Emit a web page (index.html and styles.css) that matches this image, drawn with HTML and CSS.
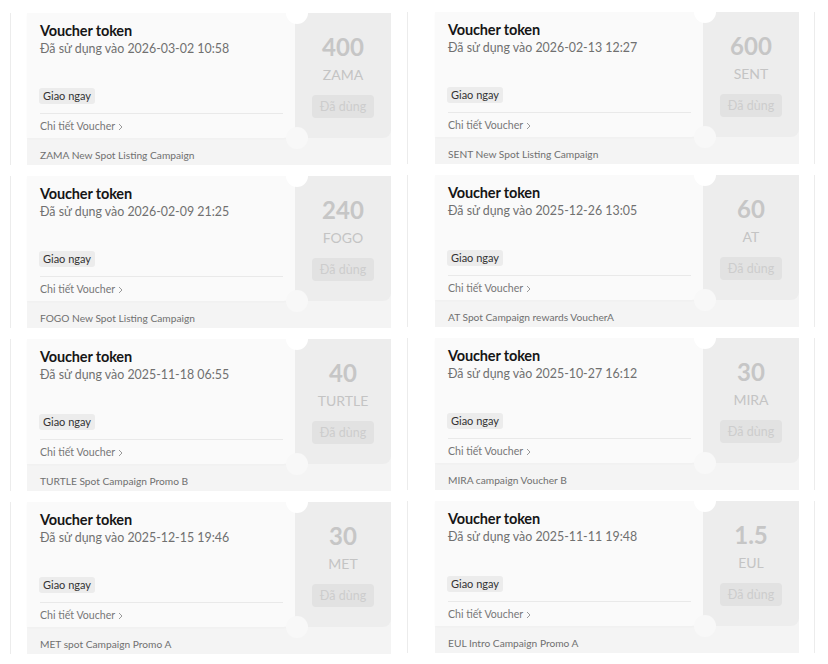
FILE: index.html
```html
<!DOCTYPE html>
<html lang="vi">
<head>
<meta charset="utf-8">
<title>Vouchers</title>
<link rel="stylesheet" href="styles.css">
</head>
<body>
<div class="page">
  <div class="col col-left">
    <div class="cell"><div class="card">
      <div class="top">
        <div class="main">
          <div class="title">Voucher token</div>
          <div class="date">Đã sử dụng vào 2026-03-02 10:58</div>
          <span class="tag">Giao ngay</span>
          <div class="detail">Chi tiết Voucher <svg class="chev" width="5" height="8" viewBox="0 0 5 8"><path d="M1 1l3 3-3 3" fill="none" stroke="#9a9a9a" stroke-width="1"/></svg></div>
        </div>
        <div class="stub">
          <div class="amount">400</div>
          <div class="coin">ZAMA</div>
          <div class="btn">Đã dùng</div>
        </div>
      </div>
      <div class="foot">ZAMA New Spot Listing Campaign</div>
    </div></div>

    <div class="cell"><div class="card">
      <div class="top">
        <div class="main">
          <div class="title">Voucher token</div>
          <div class="date">Đã sử dụng vào 2026-02-09 21:25</div>
          <span class="tag">Giao ngay</span>
          <div class="detail">Chi tiết Voucher <svg class="chev" width="5" height="8" viewBox="0 0 5 8"><path d="M1 1l3 3-3 3" fill="none" stroke="#9a9a9a" stroke-width="1"/></svg></div>
        </div>
        <div class="stub">
          <div class="amount">240</div>
          <div class="coin">FOGO</div>
          <div class="btn">Đã dùng</div>
        </div>
      </div>
      <div class="foot">FOGO New Spot Listing Campaign</div>
    </div></div>

    <div class="cell"><div class="card">
      <div class="top">
        <div class="main">
          <div class="title">Voucher token</div>
          <div class="date">Đã sử dụng vào 2025-11-18 06:55</div>
          <span class="tag">Giao ngay</span>
          <div class="detail">Chi tiết Voucher <svg class="chev" width="5" height="8" viewBox="0 0 5 8"><path d="M1 1l3 3-3 3" fill="none" stroke="#9a9a9a" stroke-width="1"/></svg></div>
        </div>
        <div class="stub">
          <div class="amount">40</div>
          <div class="coin">TURTLE</div>
          <div class="btn">Đã dùng</div>
        </div>
      </div>
      <div class="foot">TURTLE Spot Campaign Promo B</div>
    </div></div>

    <div class="cell"><div class="card">
      <div class="top">
        <div class="main">
          <div class="title">Voucher token</div>
          <div class="date">Đã sử dụng vào 2025-12-15 19:46</div>
          <span class="tag">Giao ngay</span>
          <div class="detail">Chi tiết Voucher <svg class="chev" width="5" height="8" viewBox="0 0 5 8"><path d="M1 1l3 3-3 3" fill="none" stroke="#9a9a9a" stroke-width="1"/></svg></div>
        </div>
        <div class="stub">
          <div class="amount">30</div>
          <div class="coin">MET</div>
          <div class="btn">Đã dùng</div>
        </div>
      </div>
      <div class="foot">MET spot Campaign Promo A</div>
    </div></div>
  </div>

  <div class="col col-right">
    <div class="cell"><div class="card">
      <div class="top">
        <div class="main">
          <div class="title">Voucher token</div>
          <div class="date">Đã sử dụng vào 2026-02-13 12:27</div>
          <span class="tag">Giao ngay</span>
          <div class="detail">Chi tiết Voucher <svg class="chev" width="5" height="8" viewBox="0 0 5 8"><path d="M1 1l3 3-3 3" fill="none" stroke="#9a9a9a" stroke-width="1"/></svg></div>
        </div>
        <div class="stub">
          <div class="amount">600</div>
          <div class="coin">SENT</div>
          <div class="btn">Đã dùng</div>
        </div>
      </div>
      <div class="foot">SENT New Spot Listing Campaign</div>
    </div></div>

    <div class="cell"><div class="card">
      <div class="top">
        <div class="main">
          <div class="title">Voucher token</div>
          <div class="date">Đã sử dụng vào 2025-12-26 13:05</div>
          <span class="tag">Giao ngay</span>
          <div class="detail">Chi tiết Voucher <svg class="chev" width="5" height="8" viewBox="0 0 5 8"><path d="M1 1l3 3-3 3" fill="none" stroke="#9a9a9a" stroke-width="1"/></svg></div>
        </div>
        <div class="stub">
          <div class="amount">60</div>
          <div class="coin">AT</div>
          <div class="btn">Đã dùng</div>
        </div>
      </div>
      <div class="foot">AT Spot Campaign rewards VoucherA</div>
    </div></div>

    <div class="cell"><div class="card">
      <div class="top">
        <div class="main">
          <div class="title">Voucher token</div>
          <div class="date">Đã sử dụng vào 2025-10-27 16:12</div>
          <span class="tag">Giao ngay</span>
          <div class="detail">Chi tiết Voucher <svg class="chev" width="5" height="8" viewBox="0 0 5 8"><path d="M1 1l3 3-3 3" fill="none" stroke="#9a9a9a" stroke-width="1"/></svg></div>
        </div>
        <div class="stub">
          <div class="amount">30</div>
          <div class="coin">MIRA</div>
          <div class="btn">Đã dùng</div>
        </div>
      </div>
      <div class="foot">MIRA campaign Voucher B</div>
    </div></div>

    <div class="cell"><div class="card">
      <div class="top">
        <div class="main">
          <div class="title">Voucher token</div>
          <div class="date">Đã sử dụng vào 2025-11-11 19:48</div>
          <span class="tag">Giao ngay</span>
          <div class="detail">Chi tiết Voucher <svg class="chev" width="5" height="8" viewBox="0 0 5 8"><path d="M1 1l3 3-3 3" fill="none" stroke="#9a9a9a" stroke-width="1"/></svg></div>
        </div>
        <div class="stub">
          <div class="amount">1.5</div>
          <div class="coin">EUL</div>
          <div class="btn">Đã dùng</div>
        </div>
      </div>
      <div class="foot">EUL Intro Campaign Promo A</div>
    </div></div>
  </div>
</div>
</body>
</html>
```

FILE: styles.css
```css
* { box-sizing: border-box; }
html, body { margin: 0; padding: 0; background: #ffffff; }
body {
  font-family: Lato, "Noto Sans", "Liberation Sans", sans-serif;
  color: #1a1a1a;
  width: 828px;
  height: 664px;
  overflow: hidden;
}
.page {
  display: flex;
  padding-left: 10px;
}
.col {
  display: flex;
  flex-direction: column;
  gap: 11px;
}
.col-left { width: 397px; padding-top: 13px; }
.col-right { width: 408px; padding-top: 12px; }
.cell {
  border-left: 1px solid #ececec;
  padding-left: 16px;
}
.col-right .cell {
  padding-left: 27px;
  border-right: 1px solid #ececec;
  width: 408px;
}
.card {
  width: 364px;
  height: 152px;
  background: #f4f4f4;
  display: flex;
  flex-direction: column;
}
.top {
  display: flex;
  height: 125px;
}
.main {
  width: 268px;
  background: #fafafa;
  border-radius: 0 0 12px 0;
  padding: 9px 12px 0 13px;
  display: flex;
  flex-direction: column;
  align-items: flex-start;
  box-shadow: 0 1px 3px rgba(0,0,0,0.025);
}
.title {
  font-size: 14.5px;
  font-weight: 700;
  line-height: 18px;
  color: #161616;
  letter-spacing: -0.15px;
}
.date {
  margin-top: 1px;
  font-size: 12.4px;
  line-height: 16px;
  color: #707070;
}
.tag {
  margin-top: 31px;
  margin-left: -1px;
  height: 16px;
  padding: 0 4px;
  background: #ececec;
  border-radius: 3px;
  font-size: 11px;
  line-height: 16px;
  color: #333333;
}
.detail {
  margin-top: 9px;
  align-self: stretch;
  border-top: 1px solid #e9e9e9;
  padding-top: 5px;
  font-size: 10.6px;
  line-height: 14px;
  color: #777777;
  display: flex;
  align-items: center;
  gap: 3px;
}
.chev { margin-top: 1px; }
.stub {
  position: relative;
  width: 96px;
  background: #ededed;
  border-radius: 0 0 8px 0;
  display: flex;
  flex-direction: column;
  align-items: center;
}
.stub::before, .stub::after {
  content: "";
  position: absolute;
  left: -9px;
  width: 22px;
  height: 22px;
  border-radius: 50%;
}
.stub::before { top: -11px; background: #ffffff; }
.stub::after { bottom: -11px; background: #f8f8f8; }
.amount {
  margin-top: 20px;
  font-size: 24px;
  font-weight: 700;
  line-height: 28px;
  color: #c6c6c6;
}
.coin {
  margin-top: 6px;
  font-size: 14px;
  line-height: 16px;
  color: #c4c4c4;
}
.btn {
  margin-top: 12px;
  width: 62px;
  height: 23px;
  border-radius: 4px;
  background: #e2e2e2;
  color: #cdcdcd;
  font-size: 12.5px;
  line-height: 23px;
  text-align: center;
}
.foot {
  padding: 11px 0 0 13px;
  font-size: 10.2px;
  line-height: 13px;
  color: #707070;
}
```
